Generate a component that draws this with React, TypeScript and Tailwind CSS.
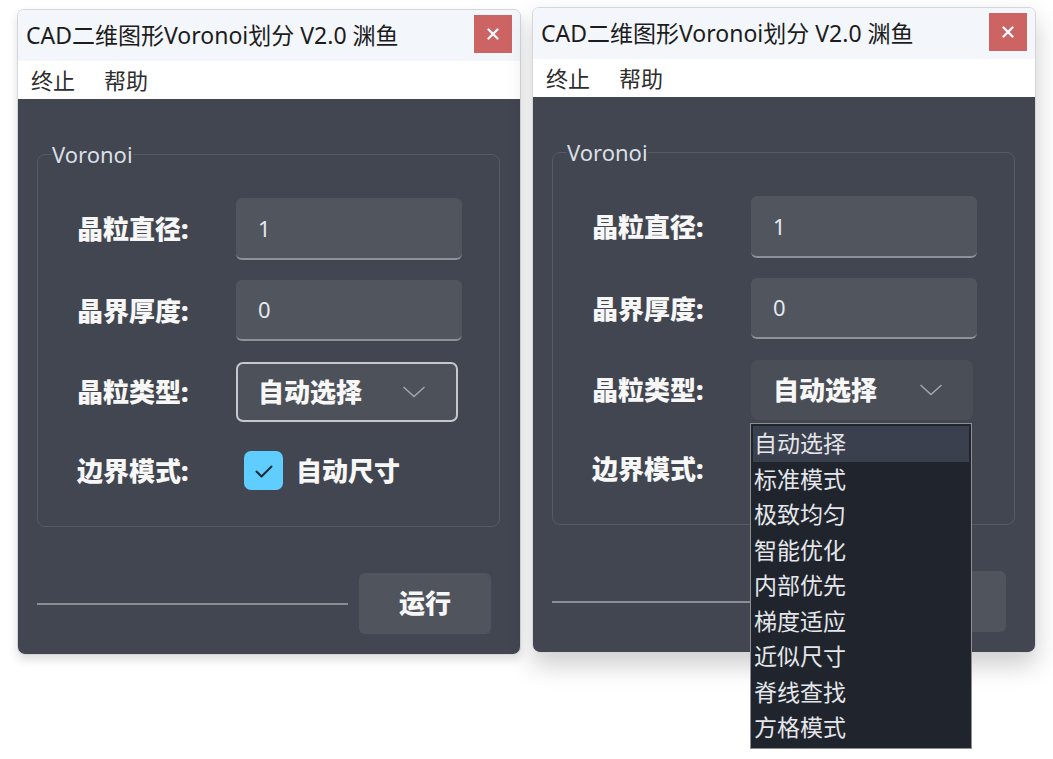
import { clsx } from "clsx";

const OPTIONS = ["自动选择", "标准模式", "极致均匀", "智能优化", "内部优先", "梯度适应", "近似尺寸", "脊线查找", "方格模式"];

function Chevron() {
  return (
    <svg width="24" height="12" viewBox="0 0 24 12" className="ml-auto mr-[30px] shrink-0">
      <polyline points="1.5,1 12,10.5 22.5,1" fill="none" stroke="#a3a7ad" strokeWidth="1.5" />
    </svg>
  );
}

function Row({ label, className, children }: { label: string; className?: string; children: React.ReactNode }) {
  return (
    <div className={clsx("flex items-center", className)}>
      <span className="w-[159px] shrink-0 text-[26px] font-black leading-none text-[#f7f7f7]">{label}</span>
      {children}
    </div>
  );
}

function TextBox({ value }: { value: string }) {
  return (
    <div className="flex h-full w-[226px] items-center rounded-[6px] border-b-2 border-[#8e9197] bg-[#51555e] pl-[22px] text-[22px] text-[#e2e9f0]">
      {value}
    </div>
  );
}

function VoronoiWindow({ open, className }: { open: boolean; className?: string }) {
  return (
    <div
      className={clsx(
        "flex h-[646px] w-[504px] shrink-0 flex-col rounded-[7px] border border-[#d4d6da]",
        open ? "shadow-[0_12px_26px_rgba(0,0,0,0.2)]" : "shadow-[0_5px_10px_rgba(0,0,0,0.13)]",
        className,
      )}
    >
      <div className="flex h-[51px] items-center justify-between rounded-t-[7px] bg-[#f3f6fb] pl-[8px] pr-[8px]">
        <span className="text-[23px] leading-none text-[#1c1c1c]">CAD二维图形Voronoi划分 V2.0 渊鱼</span>
        <button className="mb-[3px] flex h-[38px] w-[38px] items-center justify-center bg-[#cd6464]">
          <svg width="12" height="12" viewBox="0 0 12 12">
            <path d="M1.5 1.5l9 9M10.5 1.5l-9 9" stroke="#fff" strokeWidth="2.2" strokeLinecap="round" />
          </svg>
        </button>
      </div>
      <div className="flex h-[38px] items-center gap-[29px] bg-white pl-[13px] text-[22px] leading-none text-[#2d2d2d]">
        <span>终止</span>
        <span>帮助</span>
      </div>
      <div className="flex flex-1 flex-col rounded-b-[7px] bg-[#414650]">
        <fieldset className="ml-[19px] mr-[20px] mt-[41px] h-[387px] rounded-[8px] border border-[#555a64] pl-[39px] pt-[30px]">
          <legend className="ml-[-25px] text-[22px] leading-[28px] text-[#d9dee4]">Voronoi</legend>
          <div className="flex flex-col">
            <Row label="晶粒直径:" className="h-[62px]">
              <TextBox value="1" />
            </Row>
            <Row label="晶界厚度:" className="mt-[20px] h-[61px]">
              <TextBox value="0" />
            </Row>
            <Row label="晶粒类型:" className="mt-[21px] h-[60px]">
              <div className="relative h-full">
                <div
                  className={clsx(
                    "flex h-full w-[222px] items-center rounded-[7px] text-[26px] font-black leading-none text-[#f7f7f7]",
                    open ? "bg-[#4a4e56] pl-[22px]" : "border-2 border-[#c6c8cc] bg-[#4d5159] pl-[20px]",
                  )}
                >
                  自动选择
                  <Chevron />
                </div>
                {open && (
                  <div className="absolute left-[-1px] top-[63px] z-10 w-[222px] border border-[#8f8f8f] bg-[#20252d] p-[2px]">
                    {OPTIONS.map((o, i) => (
                      <div
                        key={o}
                        className={clsx(
                          "flex h-[35.5px] items-center pl-[1px] text-[23px] leading-none text-[#e4e6ea]",
                          i === 0 && "bg-[#3a404d]",
                        )}
                      >
                        {o}
                      </div>
                    ))}
                  </div>
                )}
              </div>
            </Row>
            <Row label="边界模式:" className="mt-[29px] h-[39px]">
              {/* covered by the open list in the right window */}
              <div className={clsx("flex items-center", open && "invisible")}>
                <div className="ml-[8px] flex h-[39px] w-[39px] items-center justify-center rounded-[7px] bg-[#60cdff]">
                  <svg width="24" height="24" viewBox="0 0 24 24">
                    <path d="M4.5 12.5l5 5 10-10" fill="none" stroke="#1d2a33" strokeWidth="2" strokeLinecap="round" strokeLinejoin="round" />
                  </svg>
                </div>
                <span className="ml-[13px] text-[26px] font-black leading-none text-[#f7f7f7]">自动尺寸</span>
              </div>
            </Row>
          </div>
        </fieldset>
        <div className="mt-[46px] flex items-center pl-[19px] pr-[29px]">
          <div className="h-[2px] flex-1 bg-[#8a8d92]" />
          <button className="ml-[11px] flex h-[61px] w-[132px] items-center justify-center rounded-[6px] bg-[#50545d] text-[26px] font-black text-[#f7f7f7]">
            运行
          </button>
        </div>
      </div>
    </div>
  );
}

export default function App() {
  return (
    <div className="flex h-[759px] w-[1053px] items-start gap-[11px] overflow-hidden bg-white pl-[17px] font-['Noto_Sans','Noto_Sans_CJK_SC',sans-serif]">
      <VoronoiWindow open={false} className="mt-[9px]" />
      <VoronoiWindow open className="mt-[7px]" />
    </div>
  );
}
